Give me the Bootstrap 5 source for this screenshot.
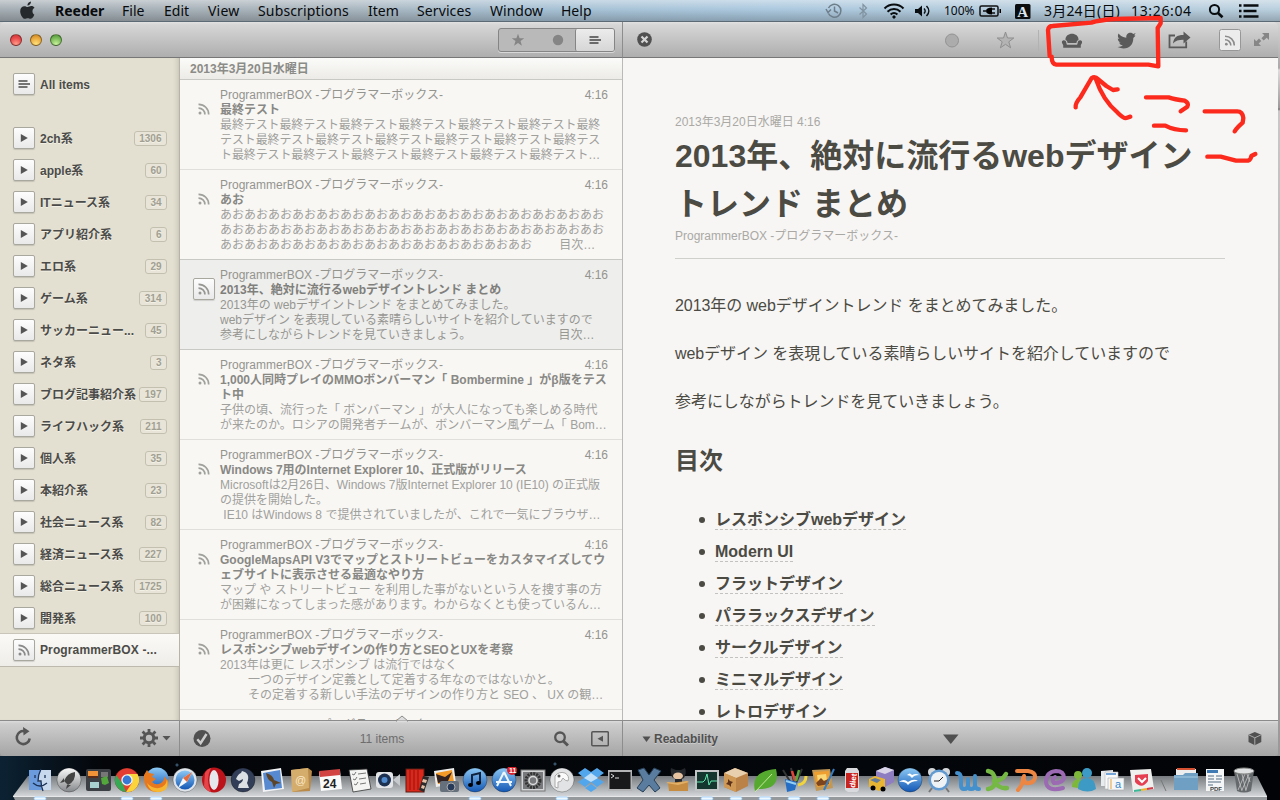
<!DOCTYPE html>
<html lang="ja">
<head>
<meta charset="utf-8">
<title>Reeder</title>
<link href="https://cdn.jsdelivr.net/npm/bootstrap@5.3.0/dist/css/bootstrap.min.css" rel="stylesheet">
<style>
html,body{height:100%}
body{width:1280px;height:800px;overflow:hidden;background:#050b12;font-family:"Liberation Sans","Noto Sans CJK JP",sans-serif;font-size:12px;line-height:15px;color:#484843;text-spacing-trim:space-all}
svg{display:block;flex:none}
.menubar{height:22px;background:linear-gradient(#fff6,#fff0 45%,#0003),linear-gradient(90deg,#a5aeb4,#a9b4bc 25%,#a6c0d3 42%,#abc8de 60%,#b4cbdb 80%,#b9cfde);border-bottom:1px solid #5c6a75;font:14px/22px "Noto Sans","Noto Sans CJK JP",sans-serif;color:#080a0c;white-space:nowrap}
.menubar>*{flex:none}
.win{height:734px;width:1278px;border-radius:5px 5px 3px 4px;overflow:hidden}
.desk{height:734px;background:linear-gradient(#d5d5d5,#aaa 46px,#dcdcdc 48px,#9b9b9b 86px,#777 87px,#c8c8c8 89px,#999)}
.bar{height:36px;background:linear-gradient(#e2e2e2,#d6d6d6 8%,#aeaeae);border-bottom:1px solid #777}
.foot{height:36px;background:linear-gradient(#dcdcdc,#cdcdcd 8%,#a5a5a5);border-top:1px solid #8b8b8b;color:#555}
.split{border-right:1px solid #8d8d8d;box-shadow:1px 0 #d0d0d0}
.lamp{width:12px;height:12px;border-radius:50%;border:1px solid #0006}
.seg{width:117px;height:24px;border:1px solid #858585;border-radius:3px;background:#b9b9b9;box-shadow:0 1px #d8d8d8}
.seg .on{width:39px;border-left:1px solid #858585;border-radius:2px;background:linear-gradient(#ececec,#d6d6d6)}
.key{width:22px;height:22px;border:1px solid #a9a89f;border-radius:2px;background:linear-gradient(#fdfdfd,#e9e9ea);box-shadow:0 1px 1px #0002;flex:none}
.side{width:180px;height:662px;background:#e3e0d1;border-right:1px solid #b7b4a6;box-shadow:inset -5px 0 6px -5px #0003;font-weight:bold;color:#4b4b49;text-shadow:0 1px #f3f1e6;white-space:nowrap}
.side .line{height:32px;padding:0 12px 0 13px}
.side .label{margin-left:5px;padding-top:2px}
.side .count{height:15px;padding:0 4.500px;border:1px solid #c4c0b0;border-radius:3px;background:#e8e5d8;color:#a19f93;font-size:10px;line-height:13px;text-align:center;flex:none}
.side .picked{background:linear-gradient(#fbfaf7,#efede8);border-top:1px solid #c9c6b9;border-bottom:1px solid #bdbaad;height:34px;margin-top:-1px;padding-bottom:1px}
.feed{width:443px;height:662px;background:#f8f7f4;border-right:1px solid #b9b9b7;color:#a0a09c;overflow:hidden}
.day{height:22px;background:linear-gradient(#fbfbf9,#ecebe7);border-bottom:1px solid #c8c8c4;font-weight:bold;color:#8b8b87;line-height:22px;padding-left:10px}
.post{height:90px;flex:none;border-bottom:1px solid #e0dfdb;padding:8px 14px 0 13px;white-space:pre}
.post .ic{width:22px;height:22px;margin:10px 5px 0 0}
.post b{color:#888884;display:block}
.post .src{color:#94948f}
.post.cur{background:#eeeeec;box-shadow:0 -1px #c8c8c5;border-color:#c8c8c5;color:#969692}
.post.cur b{color:#7f7f7c}
.post .tight{letter-spacing:-.12px}
.read{width:655px;height:662px;background:#f7f6f4;padding:57px 53px 0 52px;overflow:hidden;color:#4b4a43;white-space:nowrap}
.read .meta{color:#aaa9a5}
.read h1{font-size:32px;line-height:48px;font-weight:bold;margin:2px 0 1px;color:#4b4a43}
.read p{font-size:16px;line-height:24px;margin:0 0 24px;letter-spacing:-.06px}
.read h2{font-size:24px;line-height:32px;font-weight:bold;margin:0}
.read hr{margin:14px 0 35px;border-top:1px solid #cfcfcc;opacity:1}
.read li{height:32px;padding:6px 0 0 24px;font-size:16px;line-height:20px;font-weight:bold}
.read li::before{content:"";width:6px;height:6px;border-radius:50%;background:#4b4a43;margin:7px 10px 0 0}
.read li span{height:20px;border-bottom:1px dashed #c3c2be}
.dock{height:44px;background:radial-gradient(circle at 28px 25px,#4a6a86 0 1px,#0000 2px),radial-gradient(circle at 555px 8px,#35526a 0 1px,#0000 2px),radial-gradient(circle at 177px 9px,#35526a 0 1px,#0000 2px),linear-gradient(90deg,#0c2233,#030509 8%,#03060a 70%,#020306)}
.dock .tray{left:0;top:0}
.dock .app{width:29px;height:44px;padding:11px 0 0 1px}
.over{left:1040px;top:14px;pointer-events:none}
</style>
</head>
<body>
<svg width="0" height="0" class="position-absolute">
<defs>
<symbol id="rss" viewBox="0 0 12 12"><g fill="none" stroke="currentColor" stroke-width="1.7"><path d="M.5 1.3A10 10 0 0 1 10.700 11.500"/><path d="M.5 5.100A6.300 6.300 0 0 1 6.900 11.500"/></g><circle cx="2" cy="10" r="1.500" fill="currentColor"/></symbol>
<symbol id="lines" viewBox="0 0 12 10"><path d="M.5 2h9M.5 5h11.500M.5 8h9" stroke="currentColor" stroke-width="1.600"/></symbol>
<symbol id="star" viewBox="0 0 20 20"><path d="M10 1l2.300 6.500h6.700l-5.400 4.100 2 6.700L10 14.300l-5.600 4 2-6.700L1 7.500h6.700z"/></symbol>
<linearGradient id="tray" x2="0" y2="1"><stop stop-color="#777b7f"/><stop offset=".5" stop-color="#a5a8ab"/><stop offset="1" stop-color="#d3d5d8"/></linearGradient>
<linearGradient id="blue" x2="0" y2="1"><stop stop-color="#8cc8f5"/><stop offset="1" stop-color="#1257b5"/></linearGradient>
<linearGradient id="steel" x2="0" y2="1"><stop stop-color="#fafafa"/><stop offset="1" stop-color="#85888b"/></linearGradient>
</defs>
</svg>

<nav class="menubar d-flex align-items-center">
  <svg width="55" height="22" viewBox="0 0 55 22"><path d="M31 1.500c.2 2-1.500 4-3.600 4 0-2 1.600-3.800 3.600-4zM34.300 14.800c-1 2.400-2.400 4-3.800 4-1 0-1.500-.6-2.700-.6s-1.800.6-2.800.6c-2.400 0-4.800-4.200-4.800-7.600 0-3.200 2-5 4.300-5 1.300 0 2.300.8 3.200.8.900 0 2-.9 3.600-.9 1.400 0 2.600.7 3.200 1.700-2.900 1.600-2.500 5.800 0 7z" fill="#26292c"/></svg>
  <strong style="width:67px">Reeder</strong><span style="width:42px">File</span><span style="width:44px">Edit</span><span style="width:50px;letter-spacing:.2px">View</span><span style="width:110px;letter-spacing:.15px">Subscriptions</span><span style="width:49px">Item</span><span style="width:73px;letter-spacing:.1px">Services</span><span style="width:71px">Window</span><span style="width:259px">Help</span>
  <svg width="124" height="22" viewBox="820 0 124 22" fill="none" stroke="#6d7e8a" stroke-width="1.500"><path d="M828.500 8a6.500 6.500 0 1 1 0 5.500M826 9l2 3.500 3-3M834.500 6.500V11l3.500 2"/><path d="M859.500 7.500l7 6.500-3.500 3.500v-13l3.500 3.500-7 6.500" stroke-width="1.200" stroke="#8093a0"/><g stroke="#0a0d10" stroke-width="2"><path d="M884.500 8.500c5-5.300 14-5.300 19 0M887.500 11.700c3.700-3.600 9.300-3.600 13 0M890.600 14.600c2-1.800 4.800-1.800 6.800 0"/></g><path d="M894 15l2 2-2 2-2-2z" fill="#0a0d10" stroke="none"/><path d="M915 9h3l4-3.500v11l-4-3.500h-3z" fill="#0a0d10" stroke="none"/><path d="M924 8.500c1.500 1.500 1.500 3.500 0 5M926.500 6c3 3 3 7 0 10" stroke="#0a0d10"/></svg>
  <span style="width:35px;font-size:12px;padding-top:1px">100%</span>
  <svg width="65" height="22" viewBox="979 0 65 22"><rect x="980" y="6" width="18" height="10" rx="1.500" fill="none" stroke="#111" stroke-width="1.500"/><path d="M999.500 9h1.500v4h-1.500z"/><path d="M983 11h3m5-2h4m-4 4h4" stroke="#111" stroke-width="1.500"/><path d="M992 7.500v7c-4 0-6-1.500-6-3.500s2-3.500 6-3.500z"/><rect x="1015" y="4" width="15.500" height="15" rx="1.500" fill="#0b0d0f"/><text x="1017.200" y="16.500" font-family="Liberation Serif" font-weight="bold" font-size="15" fill="#dfe7ee">A</text></svg>
  <span style="width:87px;letter-spacing:.2px">3月24日(日)</span><span style="width:74px;letter-spacing:.65px">13:26:04</span>
  <svg width="60" height="22" viewBox="1205 0 60 22" fill="none" stroke="#0a0d10"><circle cx="1214.500" cy="9.500" r="4.600" stroke-width="2"/><path d="M1218 13l4.500 4.300" stroke-width="2.700"/><path d="M1239 5.500h2.500m2 0h15M1239 11h2.500m2 0h13M1239 16.500h2.500m2 0h15" stroke-width="2.600"/></svg>
</nav>

<div class="desk">
<main class="win d-flex flex-column">
  <header class="d-flex">
    <div class="bar split d-flex align-items-center" style="width:623px;padding:0 7px 0 10px">
      <div class="d-flex gap-2"><i class="lamp" style="background:radial-gradient(circle at 50% 90%,#ff9c8a,#e9494b 60%,#c43538)"></i><i class="lamp" style="background:radial-gradient(circle at 50% 90%,#ffe27d,#eaa83c 60%,#c07f24)"></i><i class="lamp" style="background:radial-gradient(circle at 50% 90%,#c8f29c,#78b957 60%,#4c8c36)"></i></div>
      <div class="seg d-flex ms-auto">
        <span class="d-flex flex-fill align-items-center justify-content-center pe-1"><svg width="14" height="14" fill="#858585"><use href="#star"/></svg></span>
        <span class="d-flex flex-fill align-items-center justify-content-center"><svg width="12" height="12"><circle cx="6" cy="6" r="5.200" fill="#858585"/></svg></span>
        <span class="on d-flex align-items-center justify-content-center" style="color:#444"><svg width="12" height="10"><use href="#lines"/></svg></span>
      </div>
    </div>
    <div class="bar flex-fill">
      <svg width="655" height="35" viewBox="623 22 655 35" fill="#5a5a5a">
        <circle cx="644.500" cy="39.500" r="7.300" fill="#505050"/><path d="M641.500 36.500l6 6m0-6l-6 6" stroke="#d5d5d5" stroke-width="2.200"/>
        <circle cx="952" cy="40.500" r="6.500" fill="#acacac" stroke="#929292"/>
        <path d="M1005.500 32l2 6h6.300l-5 3.800 1.800 6-5.100-3.500-5.100 3.500 1.800-6-5-3.800h6.300z" fill="#b4b4b4" stroke="#8e8e8e"/>
        <path d="M1038.500 30v21" stroke="#b2b2b2"/>
        <path d="M1065.500 40c-.5-8.300 13.500-8.300 13 0-1.500.4-2 1.700-2 3h-9c0-1.300-.5-2.600-2-3z"/><path d="M1062 43c-1-3.500 4-3.800 4.300-.5l.4 2h10.600l.4-2c.3-3.300 5.300-3 4.300.5l-1.200 2v2.700h-17.600V45z"/><path d="M1067 44.300h10" stroke="#b7b7b7" stroke-width=".7"/>
        <path d="M1135.500 35.700l-2.200 2.200c.4 7.600-6.500 13.200-15.800 9.100 2.300.1 4-.5 5.300-1.700-2-.1-3.200-1.200-3.700-2.700h1.700c-2-.7-3-2.100-3-4.100l1.700.5c-1.800-1.400-2-3.500-1-5.400 2.200 2.500 4.700 3.900 7.800 4.100-.5-5 4.700-6.300 7-3.700l2.400-1-1.500 2.300z"/>
        <path d="M1175 35.500h-5.500v11.800h16.700v-5.800" fill="none" stroke="#5a5a5a" stroke-width="1.800"/><path d="M1173 43.500c.5-6 4-8.500 10.500-8.500v-3.500l7 6-7 6v-3.700c-5 0-8 1-10.500 3.700z"/>
        <rect x="1219.500" y="29.500" width="21" height="21" rx="2" fill="#ececec" stroke="#979797"/><svg x="1224.500" y="35" width="11" height="11" color="#8b8b8b"><use href="#rss"/></svg>
        <path d="M1262 33h7v7l-2.300-2.300-3 2.800-2.300-2.300 2.900-2.900zM1261 46h-7v-7l2.300 2.300 2.700-2.700 2.300 2.300-2.700 2.700z" fill="#868686"/>
      </svg>
    </div>
  </header>

  <section class="d-flex">
    <aside class="side flex-shrink-0">
      <div class="line d-flex align-items-center" style="margin:10px 0 22px"><span class="key d-flex align-items-center justify-content-center"><svg width="12" height="10"><use href="#lines"/></svg></span><span class="label">All items</span></div>
      <div id="folders"></div>
      <div class="line picked d-flex align-items-center"><span class="key d-flex align-items-center justify-content-center" style="color:#8a8a8a"><svg width="12" height="12"><use href="#rss"/></svg></span><span class="label" style="letter-spacing:.12px">ProgrammerBOX -...</span></div>
    </aside>
    <div class="feed d-flex flex-column flex-shrink-0" id="feed"><div class="day flex-shrink-0">2013年3月20日水曜日</div></div>
    <article class="read">
      <div class="meta">2013年3月20日水曜日 4:16</div>
      <h1>2013年、絶対に流行るwebデザイン<br>トレンド まとめ</h1>
      <div class="meta">ProgrammerBOX -プログラマーボックス-</div>
      <hr>
      <p>2013年の webデザイントレンド をまとめてみました。</p>
      <p>webデザイン を表現している素晴らしいサイトを紹介していますので</p>
      <p>参考にしながらトレンドを見ていきましょう。</p>
      <h2 style="margin:31px 0 27px">目次</h2>
      <ul class="list-unstyled m-0">
        <li class="d-flex"><span>レスポンシブwebデザイン</span></li>
        <li class="d-flex"><span>Modern UI</span></li>
        <li class="d-flex"><span>フラットデザイン</span></li>
        <li class="d-flex"><span>パララックスデザイン</span></li>
        <li class="d-flex"><span>サークルデザイン</span></li>
        <li class="d-flex"><span>ミニマルデザイン</span></li>
        <li class="d-flex"><span>レトロデザイン</span></li>
      </ul>
    </article>
  </section>

  <footer class="d-flex position-relative">
    <div class="foot split" style="width:180px">
      <svg width="179" height="35" viewBox="0 721 179 35"><path d="M29.700 738.500a6.500 6.500 0 1 1-5.200-7.300" fill="none" stroke="#555" stroke-width="2.600"/><path d="M23 727l6.500 4.300-6 4.200z" fill="#555"/><circle cx="149" cy="738" r="4.700" fill="none" stroke="#555" stroke-width="3"/><path d="M149 729v4m0 10v4m-9-9h4m10 0h4m-15.400-6.400l2.800 2.800m7.200 7.200l2.800 2.800m0-12.800l-2.800 2.800m-7.200 7.200l-2.800 2.800" stroke="#555" stroke-width="2.800"/><path d="M162.500 736h8l-4 4.500z" fill="#555"/></svg>
    </div>
    <div class="foot split d-flex align-items-center" style="width:443px;padding:0 13px">
      <svg width="18" height="18" viewBox="0 0 18 18"><circle cx="9" cy="8.500" r="8.500" fill="#505050"/><path d="M4.300 9.300l3.300 3.800L13.500 4" fill="none" stroke="#ccc" stroke-width="2.500"/></svg>
      <span class="flex-fill text-center" style="padding-top:2px;color:#6d6d6d">11 items</span>
      <svg width="56" height="18" viewBox="0 0 56 18" fill="none" stroke="#555"><circle cx="7" cy="7.300" r="4.800" stroke-width="2.300"/><path d="M10.300 11l4.600 4.500" stroke-width="3"/><rect x="38.800" y="1.800" width="16.500" height="14" rx="1" stroke-width="1.500"/><path d="M50 5.800v6L44.500 8.800z" fill="#555" stroke="none"/></svg>
    </div>
    <div class="foot flex-fill d-flex align-items-center" style="padding-left:19px">
      <svg width="12" height="8" viewBox="0 0 12 8"><path d="M.5 1.500h8L4.500 7z" fill="#505050"/></svg><b style="padding-top:2px;color:#505050;text-shadow:0 1px #ccc">Readability</b>
      <svg class="ms-auto" width="336" height="16" viewBox="942 730 336 16" fill="#505050"><path d="M943 733.500h15.500l-7.700 9.500z"/><path d="M1254.800 731l6.500 2.700v7.300l-6.500 3.300-6.300-3.300v-7.300z"/><path d="M1249 734l5.800 2.800 6-2.800M1254.800 737v7" stroke="#aaa" fill="none"/></svg>
    </div>
    <svg class="position-absolute" style="left:396px;top:-5px" width="12" height="7"><path d="M0 6l6-5 6 5z" fill="#dedede" stroke="#8b8b8b"/><path d="M1 6.500h10" stroke="#dedede"/></svg>
  </footer>
</main>
</div>

<div class="dock position-relative">
  <svg class="tray position-absolute" width="1280" height="44" viewBox="0 756 1280 44"><path d="M28 776h1229l10 20H13z" fill="url(#tray)"/><path d="M13 796h1254v4H15z" fill="#96999c"/><path d="M13 796.500h1254" stroke="#e6e8ea"/><path d="M1161 780l5 11" stroke="#777"/></svg>
  <div class="d-flex position-relative" id="dock" style="padding-left:26px"></div>
</div>

<svg class="over position-absolute" width="226" height="156" viewBox="0 0 678 468" fill="none" stroke="#fb2a1d" stroke-width="13" stroke-linecap="round" stroke-linejoin="round"><g transform="translate(-660 -42)"><path d="M689 168l-5-78q2-12 14-12l116-10q24-8 70-11l138-3v16l-9 14 2 115-30-5H709q-14-2-14-24"/><path d="M767 322q-2-12 14-30l34-58q10-6 20 4l24 20 20 12 14-2M827 236q22 66 66 102 18 18 26 16l12-4"/><path d="M978 292h68q18 6 48 10 14 8 8 18l-20 14M1002 377h34q26 14 62 14M1154 334h98q16 0 18 20l-2 14q-18 16-24 26M1162 470h40l46 12h36q8-2 10-14l12-6"/></g></svg>

<script>
// Sidebar folders: name, unread count
const folders=[['2ch系',1306],['apple系',60],['ITニュース系',34],['アプリ紹介系',6],['エロ系',29],['ゲーム系',314],['サッカーニュー...',45],['ネタ系',3],['ブログ記事紹介系',197],['ライフハック系',211],['個人系',35],['本紹介系',23],['社会ニュース系',82],['経済ニュース系',227],['総合ニュース系',1725],['開発系',100]];
document.getElementById('folders').innerHTML=folders.map(([n,c])=>`<div class="line d-flex align-items-center"><span class="key d-flex align-items-center justify-content-center"><svg width="8" height="8"><path d="M.8 0l7 4-7 4z" fill="#555"/></svg></span><span class="label">${n}</span><span class="count ms-auto">${c}</span></div>`).join('');

// Posts: title lines, body lines, extra class
const posts=[
['最終テスト','最終テスト最終テスト最終テスト最終テスト最終テスト最終テスト最終\nテスト最終テスト最終テスト最終テスト最終テスト最終テスト最終テス\nト最終テスト最終テスト最終テスト最終テスト最終テスト最終テスト…','tight'],
['あお','あお'.repeat(16)+'\n'+'あお'.repeat(16)+'\n'+'あお'.repeat(13)+'　　 目次…'],
['2013年、絶対に流行るwebデザイントレンド まとめ','2013年の webデザイントレンド をまとめてみました。\nwebデザイン を表現している素晴らしいサイトを紹介していますので\n参考にしながらトレンドを見ていきましょう。　　　　　　　 目次…','cur'],
['1,000人同時プレイのMMOボンバーマン「 Bombermine 」がβ版をテス\nト中','子供の頃、流行った「 ボンバーマン 」が大人になっても楽しめる時代\nが来たのか。ロシアの開発者チームが、ボンバーマン風ゲーム「 Bom…'],
['Windows 7用のInternet Explorer 10、正式版がリリース','Microsoftは2月26日、Windows 7版Internet Explorer 10 (IE10) の正式版\nの提供を開始した。\n IE10 はWindows 8 で提供されていましたが、これで一気にブラウザ…'],
['GoogleMapsAPI V3でマップとストリートビューをカスタマイズしてウ\nェブサイトに表示させる最適なやり方','マップ や ストリートビュー を利用した事がないという人を捜す事の方\nが困難になってしまった感があります。わからなくとも使っているん…'],
['レスポンシブwebデザインの作り方とSEOとUXを考察','2013年は更に レスポンシブ は流行ではなく\n<span style="margin-left:28px">一つのデザイン定義として定着する年なのではないかと。</span>\n<span style="margin-left:28px">その定着する新しい手法のデザインの作り方と SEO 、 UX の観…</span>'],
['','']];
document.getElementById('feed').insertAdjacentHTML('beforeend',posts.map(([t,b,s])=>`<div class="post d-flex ${s==='cur'?s:''}"><span class="ic d-flex align-items-center justify-content-center ${s==='cur'?'key':''}"><svg width="12" height="12"><use href="#rss"/></svg></span><div class="flex-fill" style="width:0"><div class="src d-flex justify-content-between"><span>ProgrammerBOX -プログラマーボックス-</span><span>4:16</span></div><b>${t}</b><div class="${s==='tight'?s:''}">${b}</div></div></div>`).join(''));

// Dock icons on a 26x26 grid; a leading '*' marks a running application
const ball=f=>`<circle cx="13" cy="13" r="12" fill="${f}" stroke="#0004"/>`;
const icons=[
'*<rect x="2" y="3" width="22" height="20" fill="#6b9bdc"/><path d="M14 3h10v20H15l-1-8h-3q0-7 3-12z" fill="#c8d9ee"/><path d="M14 2q-3 6-3 12h3q0 5 2 10M6 16q7 6 14 0M8 8v3m10-3v3" fill="none" stroke="#1b3155" stroke-width="1.300"/>',
ball('url(#steel)')+'<path d="M19 5q-8 1-11 9l4 4q8-4 7-13zM8 11l-4 5 4-1zm7 7l-5 4 1-4z" fill="#444"/>',
'<rect x="1" y="2" width="25" height="22" rx="2" fill="#3c3f43"/><rect x="3" y="4" width="10" height="7" fill="#f09338"/><path d="M3 9h10v2H3z" fill="#582c18"/><rect x="16" y="5" width="7" height="5" fill="#777"/><rect x="5" y="15" width="9" height="6" fill="#a8d0cf"/><path d="M16 11l6-2 2 7-4 2-3-1z" fill="#53a63c"/>',
'*'+ball('#e43e32')+'<path d="M2 8l7 9 3 8A12 12 0 0 1 2 8z" fill="#35a953"/><path d="M13 7h10.500A12 12 0 0 1 12 25l6-9z" fill="#fbd33b"/><circle cx="13" cy="13" r="5.700" fill="#f4f4f4"/><circle cx="13" cy="13" r="4.400" fill="#3779d4"/>',
'*<circle cx="14" cy="12" r="11.500" fill="url(#blue)"/><path d="M1 8l3-5 2 3 5 1-2 3 4 2-4 3q4 4 9 1 4-3 3-7l4 5q0 11-12 11Q0 24 1 8z" fill="#e8781d"/><path d="M4 16q5 6 12 5 7-1 8-9 3 12-8 13Q7 26 4 16z" fill="#f6b833"/>',
ball('#dfe5ea')+'<circle cx="13" cy="13" r="9.500" fill="url(#blue)"/><path d="M20 5l-5 10-9 6 5-10z" fill="#f5f7fa"/><path d="M20 5l-9 6 4 4z" fill="#e56a3c"/>',
'<ellipse cx="13" cy="13" rx="12" ry="12.500" fill="#bc1219"/><ellipse cx="13" cy="13" rx="4.600" ry="10" fill="#e6e9ec"/><path d="M4 6q2-4 6-5-6 12 0 24-5-1-7-6z" fill="#e4444a"/>',
ball('#323e57')+'<path d="M8 21h11q-1-3-2-5 4-10-5-12l-1 2q-3 1-5 6l3 2 4-2q0 3-4 5z" fill="#dbe0e5"/>',
'<path d="M2 4l20-3 3 21-21 3z" fill="#f2f3f5"/><path d="M4 6l17-3 2 18-17 2z" fill="#5689d0"/><path d="M7 6q7 2 8 7l7 3-5 1-2 4-2-6q-5-2-6-9z" fill="#5c4428"/>',
'<path d="M3 3l17-2 4 3-2 20-17 1z" fill="#b98a49"/><path d="M3 3l17-2 1 20-17 4z" fill="#d4ac6c"/><text x="7" y="17" font-size="11" fill="#fae9c8">@</text>',
'<path d="M2 5l21-2 2 19-21 2z" fill="#fafafa"/><path d="M2 4l21-2v6L3 10z" fill="#d14443"/><text x="6" y="21" font-size="12" font-weight="bold" fill="#222">24</text>',
'<path d="M3 3l18-1 4 20-18 3z" fill="#f4f4f2" stroke="#333" stroke-width=".8"/><path d="M6 7l2 1 2-3m2 2l8-1M7 12l2 1 2-3m2 2l7-1M8 17l2 1 2-3m2 2l6-1" fill="none" stroke="#777"/>',
'<rect x="1" y="5" width="17" height="16" rx="3" fill="#e3e5e8"/><circle cx="9.500" cy="13" r="6.500" fill="#1c3151"/><circle cx="9.500" cy="13" r="3" fill="#4f8acf"/><path d="M18 13l7-6v12z" fill="#c7cacd"/>',
'<rect x="2" y="2" width="18" height="23" fill="#dc281b" stroke="#5a1d14"/><path d="M6 3v20M10 3v20M14 3v20" stroke="#8f1510"/><path d="M19 9l6 1-5 15-5-2z" fill="#2b2a2a"/><path d="M19 12l4 1-1 3-4-1zm-1 6l3 1-1 3-3-1z" fill="#e6c0a5"/>',
'<path d="M1 4l20-3 2 16-20 3z" fill="#eee"/><path d="M3 6l16-3 2 12-16 2z" fill="#f39a28"/><path d="M3 7l9 3 7-5-4 9-10 2z" fill="#322"/><rect x="7" y="14" width="19" height="11" rx="2" fill="#66707c"/><circle cx="18" cy="20" r="4" fill="#273b59" stroke="#aaa"/>',
'*'+ball('url(#blue)')+'<path d="M10 18V8l8-2v10" fill="none" stroke="#10223b" stroke-width="2"/><ellipse cx="8.500" cy="18" rx="2.500" ry="2"/><ellipse cx="16.500" cy="16" rx="2.500" ry="2"/>',
ball('url(#blue)')+'<path d="M13 5L6 19M13 5l7 14M5 15h16" stroke="#eef6ff" stroke-width="2" fill="none"/><circle cx="21" cy="3" r="5" fill="#dc2029"/><text x="18" y="6" font-size="7" font-weight="bold" fill="#fff">11</text>',
'<rect x="1" y="3" width="24" height="21" fill="#d2d4d6" stroke="#777"/><rect x="3" y="5" width="20" height="17" fill="#77797c"/><circle cx="13" cy="13.500" r="7" fill="none" stroke="#333" stroke-width="3" stroke-dasharray="2 1"/><circle cx="13" cy="13.500" r="4" fill="none" stroke="#ddd" stroke-width="1.500"/>',
'*'+ball('#e2e3e4')+'<path d="M6 20V9q4-5 10-3 5 3 3 8-3 0-5-3-2 5-5 4v6z" fill="#fafafa" stroke="#aaa"/><circle cx="10" cy="9" r="1.500" fill="#555"/>',
'<path d="M7 1L0 6l6 5-6 4 7 5 6-5 6 5 7-5-7-4 7-5-7-5-6 4zM7 21l6 4 6-4-6-4z" fill="#52a6ec"/><path d="M6 11l7-5 7 5-7 4z" fill="#c0e0fa"/>',
'<rect x="1" y="3" width="24" height="21" fill="#b2b4b5"/><rect x="2.500" y="5" width="21" height="17" fill="#17191b"/><path d="M4 7l3 2-3 2m4 0h4" fill="none" stroke="#ddd"/>',
'<path d="M2 3l6-2 5 7 5-7 7 3-7 9 6 8-5 4-6-7-6 7-6-4 6-8z" fill="#597c9f" stroke="#263f58"/>',
'<path d="M7 10q-2-7-1-9l5 2h5l4-2q2 4-1 10-6 4-12-1z" fill="#24272c"/><ellipse cx="13" cy="9" rx="5" ry="3.500" fill="#e8c3a2"/><path d="M10 12h7v6h-7z" fill="#24272c"/><path d="M3 16l20-2v10H4z" fill="#c68c42"/><path d="M1 16l12 2 11-3-2-1-10 2-9-1z" fill="#e2b068"/>',
'*<rect x="1" y="3" width="24" height="21" fill="#c2c4c5"/><rect x="3" y="5" width="20" height="17" fill="#15362f"/><path d="M3 15h6l2-2 2-6 2 11 2-4h6" fill="none" stroke="#62e6ae"/>',
'*<path d="M1 6l11-5 13 5v13l-12 6L1 20z" fill="#bb8247"/><path d="M1 6l11-5 13 5-12 5z" fill="#e8cfad"/><path d="M1 6l12 5v14L1 20z" fill="#cf9955"/><path d="M5 12l2 2 3 1-2 2v3l-2-2-3-1 2-2z" fill="#5d321a"/>',
'*<path d="M3 24Q-2 4 24 2q5 21-18 20z" fill="#55a92f"/><path d="M3 25L20 7" stroke="#c5e998"/>',
'*<path d="M2 3l8 13M10 1l3 14m8-13l-6 14" stroke="#333" stroke-width="2"/><path d="M11 4l3 10" stroke="#e34637" stroke-width="2.500"/><path d="M18 3l-3 11" stroke="#58a83c" stroke-width="2.500"/><path d="M25 9q0 8-8 9" fill="none" stroke="#f1d33b" stroke-width="3"/><path d="M4 12l12 3-2 8-8 2z" fill="#256ec5"/><path d="M5 14l10 3" stroke="#95cef3" stroke-width="2"/>',
'*<path d="M2 3l18-1 3 19-17 3z" fill="#c29857"/><path d="M4 5l15-1 1 14-13 2z" fill="#ef9f2f"/><path d="M7 8l9-1 1 6-9 2z" fill="#f9d777"/><path d="M6 16l5-5 3 3 4-2 1 5-11 2z" fill="#7d451d"/><path d="M24 2L14 23" stroke="#377dc2" stroke-width="2"/>',
'<path d="M8 1h10l2 3v19l-2 2H9l-3-2V4z" fill="#d9dadd"/><path d="M7 6h12v15H7z" fill="#c8241f"/><text transform="translate(16 21) rotate(-83)" font-size="8" font-weight="bold" fill="#fff">diet</text>',
'<path d="M8 4l9-4 9 3v12l-9 5-9-2z" fill="#8f7dc1"/><path d="M8 4l9-4 9 3-9 4z" fill="#d9d4e7"/><path d="M1 12l6-3 10 3v9l-6 3-10-4z" fill="#e8b433"/><path d="M2 13l5-2 6 2-4 3z" fill="#657d9b"/><circle cx="5" cy="21" r="2.500"/><circle cx="15" cy="22" r="2.500"/>',
ball('url(#blue)')+'<path d="M10 8q3-3 5 0 4-2 7 0-5 0-7 3-2-3-5-3zM2 15q5-4 9 0 6-4 10-1-7 0-10 4-3-4-9-3z" fill="#fff"/>',
'<circle cx="6" cy="5" r="4" fill="#d5d8da"/><circle cx="20" cy="5" r="4" fill="#d5d8da"/><path d="M6 21l-3 4m17-4l3 4" stroke="#777" stroke-width="2"/><circle cx="13" cy="13" r="10.500" fill="#6199d1"/><circle cx="13" cy="13" r="8" fill="#eef2f5"/><path d="M8 14h5l4-4" fill="none" stroke="#222"/>',
'<path d="M2 6q4 0 4 6v6q0 4 3 4 4 0 4-4v-6m0 6q0 4 3 4 4 0 4-4V9m0 9q0 4 4 4" fill="none" stroke="#4390cc" stroke-width="4" stroke-linejoin="round" stroke-linecap="round"/>',
'<path d="M4 4q7 1 7 10 0 7-7 8m6-8q8 0 12-7m-11 8q4 7 12 6" fill="none" stroke="#75b843" stroke-width="4.500" stroke-linecap="round"/>',
'<path d="M4 4h11q8 1 7 7-2 6-9 5-3-3-2-7m-1 2q0 7-5 12" fill="none" stroke="#ec8642" stroke-width="4" stroke-linecap="round"/>',
'<path d="M21 21q-16 4-17-6 0-10 10-11 8 0 8 7-1 5-10 5-3-4 1-6" fill="none" stroke="#9b6ab3" stroke-width="4" stroke-linecap="round"/>',
'<circle cx="7" cy="8" r="4" fill="#7eb83a"/><path d="M1 20q0-8 7-8l5 2v8z" fill="#7eb83a"/><circle cx="16" cy="6" r="5" fill="#3c9ac4"/><path d="M7 22q0-11 9-11 8 0 9 11-8 5-18 0z" fill="#3c9ac4"/>',
'<path d="M1 4l12-1v16H1z" fill="#e8ecef"/><path d="M5 5h13v17H5z" fill="#f9f9f9" stroke="#bbb" stroke-width=".6"/><path d="M6 7h10" stroke="#4a87cb" stroke-width="1.500"/><path d="M8 11h16v12H8z" fill="#f4f6f8" stroke="#aaa" stroke-width=".6"/><path d="M11 12v10" stroke="#e9a33a"/><text x="15" y="21" font-size="11" fill="#3a87ca">a</text>',
'<path d="M1 3l21-1 3 20-21 3z" fill="#f0f1ef"/><path d="M6 8l13-1v7q-6 9-13 1z" fill="#e53f51"/><path d="M9 11l4 4 4-4" fill="none" stroke="#fff" stroke-width="2"/><path d="M5 24l7-1" stroke="#3bb897" stroke-width="2"/><path d="M12 23l6-1" stroke="#edb22d" stroke-width="2"/><path d="M18 22l6-1" stroke="#d63c4b" stroke-width="2"/>',
'-',
'<path d="M3 2h20v10H3z" fill="#eee"/><path d="M4 2h18" stroke="#d65132" stroke-width="2"/><path d="M1 8h9l2-2h13v17H1z" fill="#6fa0c4"/><path d="M1 10h24" stroke="#a8cbe2"/>',
'<path d="M4 2h18v22H4z" fill="#f3f5f7"/><path d="M5 3h11v3H5z" fill="#3f7ab5"/><path d="M6 9h6m2 0h6M6 12h6m2 0h6M6 15h13M6 18h5" stroke="#8b9baa" stroke-width="1.300"/><text x="8" y="24" font-size="6" font-weight="bold" fill="#444">PDF</text>',
'<path d="M3 4h20l-3 20q-7 3-14 0z" fill="#65696c"/><path d="M6 7l5 17M11 7l4 17m-8-1l7-16m-3 16l7-16m-3 16l4-13m-3-3l3 8" stroke="#c5c7c8" stroke-width=".8"/><ellipse cx="13" cy="4" rx="10" ry="3" fill="#dfe1e2" stroke="#888"/>'];
document.getElementById('dock').innerHTML=icons.map(s=>{
  if(s==='-')return '<span style="width:15px"></span>';
  const run=s[0]==='*';
  return `<span class="app"><svg width="27" height="33" viewBox="0 0 27 33">${run?s.slice(1):s}${run?'<rect x="7" y="30" width="12" height="3" rx="1.500" fill="#eef8ff" stroke="#8cc9ff" stroke-width=".7"/>':''}</svg></span>`}).join('');
</script>
<script src="https://cdn.jsdelivr.net/npm/bootstrap@5.3.0/dist/js/bootstrap.bundle.min.js"></script>
</body>
</html>
